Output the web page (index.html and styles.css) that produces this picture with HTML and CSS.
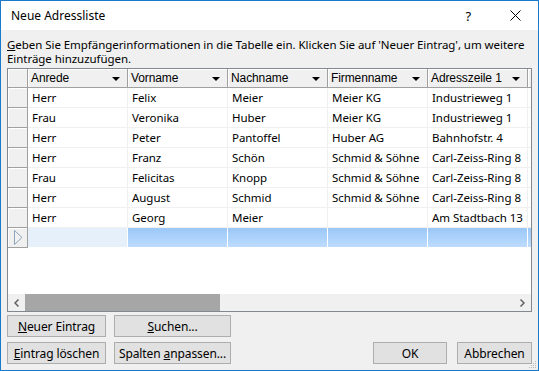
FILE: index.html
```html
<!DOCTYPE html>
<html>
<head>
    <title>Neue Adressliste</title>
    <link rel="stylesheet" href="styles.css">
</head>
<body>
    <div class="window">
        <div class="titlebar">
            <span class="title">Neue Adressliste</span>
            <span class="help">?</span>
            <span class="close">
                <svg width="11" height="11" viewBox="0 0 11 11"><path d="M0.5 0.5 L10.5 10.5 M10.5 0.5 L0.5 10.5" stroke="#000" stroke-width="1" fill="none"/></svg>
            </span>
        </div>

        <div class="content">
            <p class="intro"><u>G</u>eben Sie Empfängerinformationen in die Tabelle ein. Klicken Sie auf 'Neuer Eintrag', um weitere<br>Einträge hinzuzufügen.</p>

            <div class="grid">
                <div class="rows">
                    <div class="row head">
                        <div class="rh"></div>
                        <div class="hc">Anrede<span class="drop"></span></div>
                        <div class="hc">Vorname<span class="drop"></span></div>
                        <div class="hc">Nachname<span class="drop"></span></div>
                        <div class="hc">Firmenname<span class="drop"></span></div>
                        <div class="hc">Adresszeile 1<span class="drop"></span></div>
                        <div class="hc stub"></div>
                    </div>
                    <div class="row">
                        <div class="rh"></div>
                        <div class="c">Herr</div><div class="c">Felix</div><div class="c">Meier</div><div class="c">Meier KG</div><div class="c">Industrieweg 1</div><div class="c stub"></div>
                    </div>
                    <div class="row">
                        <div class="rh"></div>
                        <div class="c">Frau</div><div class="c">Veronika</div><div class="c">Huber</div><div class="c">Meier KG</div><div class="c">Industrieweg 1</div><div class="c stub"></div>
                    </div>
                    <div class="row">
                        <div class="rh"></div>
                        <div class="c">Herr</div><div class="c">Peter</div><div class="c">Pantoffel</div><div class="c">Huber AG</div><div class="c">Bahnhofstr. 4</div><div class="c stub"></div>
                    </div>
                    <div class="row">
                        <div class="rh"></div>
                        <div class="c">Herr</div><div class="c">Franz</div><div class="c">Schön</div><div class="c">Schmid &amp; Söhne</div><div class="c">Carl-Zeiss-Ring 8</div><div class="c stub"></div>
                    </div>
                    <div class="row">
                        <div class="rh"></div>
                        <div class="c">Frau</div><div class="c">Felicitas</div><div class="c">Knopp</div><div class="c">Schmid &amp; Söhne</div><div class="c">Carl-Zeiss-Ring 8</div><div class="c stub"></div>
                    </div>
                    <div class="row">
                        <div class="rh"></div>
                        <div class="c">Herr</div><div class="c">August</div><div class="c">Schmid</div><div class="c">Schmid &amp; Söhne</div><div class="c">Carl-Zeiss-Ring 8</div><div class="c stub"></div>
                    </div>
                    <div class="row">
                        <div class="rh"></div>
                        <div class="c">Herr</div><div class="c">Georg</div><div class="c">Meier</div><div class="c"></div><div class="c">Am Stadtbach 13</div><div class="c stub"></div>
                    </div>
                    <div class="row new">
                        <div class="rh">
                            <svg width="9" height="15" viewBox="0 0 9 15"><path d="M0.5 0.5 L8 7.5 L0.5 14.5 Z" fill="none" stroke="#8ea3be" stroke-width="1"/></svg>
                        </div>
                        <div class="c current"></div><div class="c sel"></div><div class="c sel"></div><div class="c sel"></div><div class="c sel"></div><div class="c sel stub"></div>
                    </div>
                </div>

                <div class="hscroll">
                    <div class="sb-btn">
                        <svg width="5" height="8" viewBox="0 0 5 8"><path d="M4.5 0.5 L1 4 L4.5 7.5" fill="none" stroke="#606060" stroke-width="1.5"/></svg>
                    </div>
                    <div class="sb-track">
                        <div class="sb-thumb"></div>
                    </div>
                    <div class="sb-btn">
                        <svg width="5" height="8" viewBox="0 0 5 8"><path d="M0.5 0.5 L4 4 L0.5 7.5" fill="none" stroke="#606060" stroke-width="1.5"/></svg>
                    </div>
                </div>
            </div>

            <div class="actions">
                <div class="left-btns">
                    <button class="btn"><u>N</u>euer Eintrag</button>
                    <button class="btn"><u>S</u>uchen...</button>
                    <button class="btn"><u>E</u>intrag löschen</button>
                    <button class="btn">Spalten <u>a</u>npassen...</button>
                </div>
                <div class="right-btns">
                    <button class="btn btn-ok">OK</button>
                    <button class="btn btn-cancel">Abbrechen</button>
                </div>
            </div>
        </div>

        <svg class="grip" width="8" height="8" viewBox="0 0 8 8">
            <rect x="6" y="0" width="1" height="1" fill="#b8b8b8"/>
            <rect x="4" y="2" width="1" height="1" fill="#b8b8b8"/>
            <rect x="6" y="2" width="1" height="1" fill="#b8b8b8"/>
            <rect x="2" y="4" width="1" height="1" fill="#b8b8b8"/>
            <rect x="4" y="4" width="1" height="1" fill="#b8b8b8"/>
            <rect x="6" y="4" width="1" height="1" fill="#b8b8b8"/>
            <rect x="0" y="6" width="1" height="1" fill="#b8b8b8"/>
            <rect x="2" y="6" width="1" height="1" fill="#b8b8b8"/>
            <rect x="4" y="6" width="1" height="1" fill="#b8b8b8"/>
            <rect x="6" y="6" width="1" height="1" fill="#b8b8b8"/>
        </svg>
    </div>
</body>
</html>
```

FILE: styles.css
```css
:root {
    --accent: #1979ca;
    --face: #f0f0f0;
    --edge: #a0a0a0;
}

* {
    box-sizing: border-box;
}

body {
    margin: 0;
    font-family: "Noto Sans", "Open Sans", sans-serif;
    font-size: 11.5px;
    letter-spacing: -0.05px;
    color: #000;
}

.window {
    position: relative;
    width: 539px;
    height: 371px;
    border: 1px solid var(--accent);
    background-color: var(--face);
    display: flex;
    flex-direction: column;
}

.titlebar {
    height: 30px;
    background-color: white;
    display: flex;
    align-items: center;
    padding-left: 10px;
}

.title {
    flex: 1;
    font-size: 12px;
    letter-spacing: 0;
}

.help {
    font-size: 13px;
    margin-right: 39px;
}

.close {
    display: flex;
    margin-right: 17px;
}

.content {
    flex: 1;
    padding: 8px 6px 6px 6px;
    display: flex;
    flex-direction: column;
}

.intro {
    margin: 0 0 2px 0;
    line-height: 14px;
    white-space: nowrap;
}

.grid {
    height: 244px;
    border: 1px solid #828790;
    display: flex;
    flex-direction: column;
    background-color: white;
}

.rows {
    flex: 1;
    overflow: hidden;
}

.row {
    display: grid;
    grid-template-columns: 20px repeat(5, 100px) 1fr;
    height: 20px;
}

.row.head {
    height: 19px;
}

.rh {
    background-color: var(--face);
    border-right: 1px solid var(--edge);
    border-bottom: 1px solid var(--edge);
    box-shadow: inset 1px 1px 0 white;
    display: flex;
    align-items: center;
    padding-left: 6px;
}

.hc {
    position: relative;
    background-color: var(--face);
    border-right: 1px solid var(--edge);
    border-bottom: 1px solid var(--edge);
    box-shadow: inset 1px 1px 0 white;
    font-family: "Liberation Sans", Arial, sans-serif;
    font-size: 12px;
    letter-spacing: -0.1px;
    line-height: 18px;
    padding-left: 3px;
    white-space: nowrap;
    overflow: hidden;
}

.drop {
    position: absolute;
    right: 7px;
    top: 8px;
    border-left: 4px solid transparent;
    border-right: 4px solid transparent;
    border-top: 4px solid #000;
}

.c {
    border-right: 1px solid #f0f0f0;
    border-bottom: 1px solid #f0f0f0;
    line-height: 19px;
    padding-left: 4px;
    white-space: nowrap;
    overflow: hidden;
}

.stub {
    border-right: none;
}

.new .current {
    background-color: #e5f0fb;
    border-color: white;
}

.new .sel {
    background: linear-gradient(to bottom, #9bc8f8, #bddcfd);
    border-color: white;
}

.hscroll {
    height: 17px;
    display: flex;
    background-color: var(--face);
}

.sb-btn {
    width: 17px;
    display: flex;
    align-items: center;
    justify-content: center;
}

.sb-track {
    flex: 1;
}

.sb-thumb {
    width: 195px;
    height: 100%;
    background-color: #a6a6a6;
}

.actions {
    margin-top: 3px;
    display: flex;
    align-items: flex-end;
}

.left-btns {
    display: grid;
    grid-template-columns: 99px 117px;
    column-gap: 8px;
    row-gap: 5px;
}

.right-btns {
    margin-left: auto;
    display: flex;
    gap: 10px;
}

.btn {
    height: 22px;
    background-color: #e1e1e1;
    border: 1px solid #adadad;
    font-family: inherit;
    font-size: 12px;
    letter-spacing: -0.1px;
    color: #000;
    padding: 0;
    cursor: pointer;
}

.btn-ok {
    width: 74px;
}

.btn-cancel {
    width: 75px;
}

.grip {
    position: absolute;
    right: 1px;
    bottom: 1px;
}
```
